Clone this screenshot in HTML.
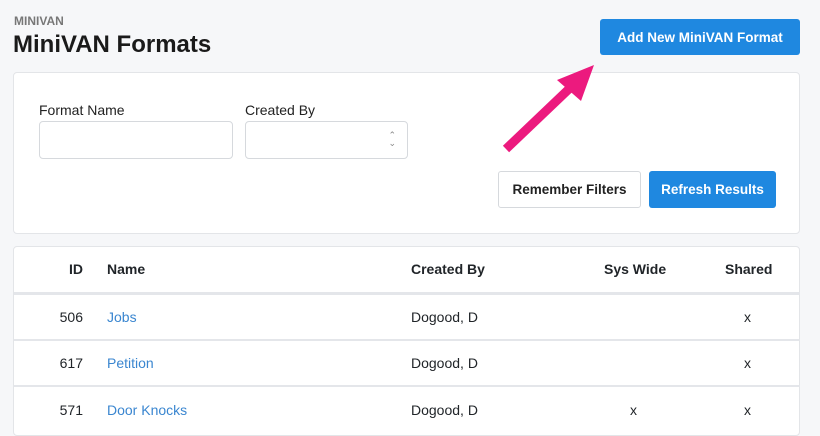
<!DOCTYPE html>
<html><head><style>
*{box-sizing:border-box;margin:0;padding:0}
body{width:820px;height:419px;overflow:hidden;background:#f6f7f9;font-family:"Liberation Sans",sans-serif;color:#212529;position:relative}
.abs{position:absolute}
.card{position:absolute;background:#fff;border:1px solid #e3e5e8;border-radius:4px}
.lbl{font-size:14px;color:#222}
.inp{position:absolute;border:1px solid #d6d9dd;border-radius:4px;background:#fff}
.btn{position:absolute;border-radius:3px;font-size:13.5px;font-weight:bold;display:flex;align-items:center;justify-content:center}
.blue{background:#1f88e0;color:#fff}
.t{position:absolute;font-size:14px}
.hr{position:absolute;left:14px;width:786px;height:2px;background:#e4e6ea}
a{color:#3a86d0}
</style></head><body>
<div class="abs" style="left:14px;top:14px;font-size:12px;font-weight:bold;color:#777">MINIVAN</div>
<div class="abs" style="left:13px;top:31px;font-size:24px;font-weight:bold;color:#1a1a1a">MiniVAN Formats</div>
<div class="btn blue" style="left:600px;top:19px;width:200px;height:36px">Add New MiniVAN Format</div>

<div class="card" style="left:13px;top:72px;width:787px;height:162px"></div>
<div class="abs lbl" style="left:39px;top:102px">Format Name</div>
<div class="abs lbl" style="left:245px;top:102px">Created By</div>
<div class="inp" style="left:39px;top:121px;width:194px;height:38px"></div>
<div class="inp" style="left:245px;top:121px;width:163px;height:38px"><span style="position:absolute;right:11px;top:9px;font-size:9px;line-height:8px;color:#888;text-align:center">&#8963;<br>&#8964;</span></div>
<div class="btn" style="left:498px;top:171px;width:143px;height:37px;border:1px solid #d6d9dd;background:#fff;color:#222">Remember Filters</div>
<div class="btn blue" style="left:649px;top:171px;width:127px;height:37px">Refresh Results</div>

<svg class="abs" style="left:0;top:0" width="820" height="419">
<line x1="506" y1="149" x2="570" y2="88" stroke="#ec1a7e" stroke-width="9"/>
<polygon points="594,65 557,80 581,101" fill="#ec1a7e"/>
</svg>

<div class="card" style="left:13px;top:246px;width:787px;height:190px"></div>
<div class="hr" style="top:292px;height:3px"></div>
<div class="hr" style="top:339px"></div>
<div class="hr" style="top:385px"></div>
<div style="font-weight:bold">
<div class="t" style="right:737px;top:261px">ID</div>
<div class="t" style="left:107px;top:261px">Name</div>
<div class="t" style="left:411px;top:261px">Created By</div>
<div class="t" style="left:604px;top:261px">Sys Wide</div>
<div class="t" style="left:725px;top:261px">Shared</div>
</div>
<div class="t" style="right:737px;top:309px">506</div>
<div class="t" style="left:107px;top:309px"><a>Jobs</a></div>
<div class="t" style="left:411px;top:309px">Dogood, D</div>
<div class="t" style="left:744px;top:309px">x</div>
<div class="t" style="right:737px;top:355px">617</div>
<div class="t" style="left:107px;top:355px"><a>Petition</a></div>
<div class="t" style="left:411px;top:355px">Dogood, D</div>
<div class="t" style="left:744px;top:355px">x</div>
<div class="t" style="right:737px;top:402px">571</div>
<div class="t" style="left:107px;top:402px"><a>Door Knocks</a></div>
<div class="t" style="left:411px;top:402px">Dogood, D</div>
<div class="t" style="left:630px;top:402px">x</div>
<div class="t" style="left:744px;top:402px">x</div>
</body></html>
